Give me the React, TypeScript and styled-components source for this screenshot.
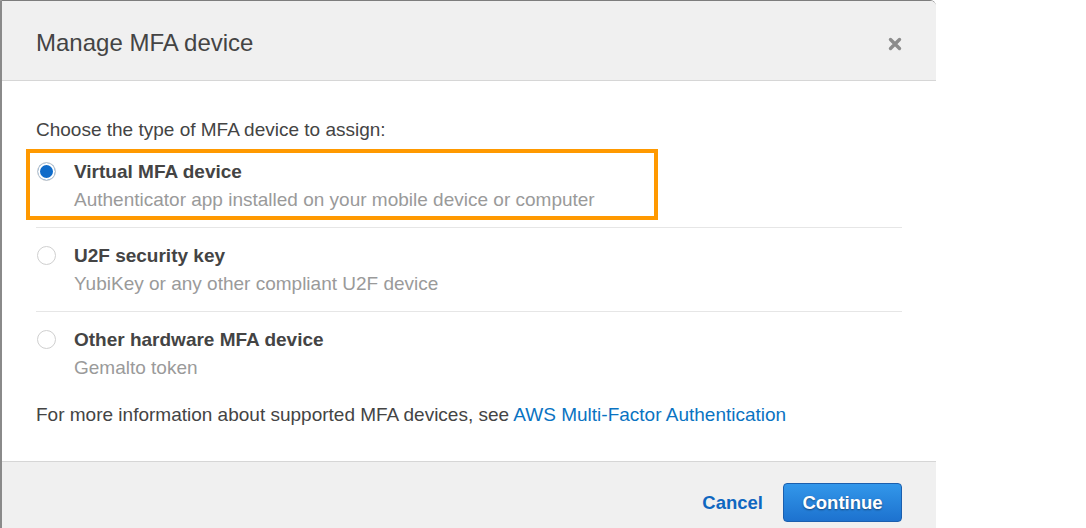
import React from 'react';
import styled, {createGlobalStyle} from "styled-components";

const GlobalStyle = createGlobalStyle`
  html, body {
    margin: 0;
    padding: 0;
    background: #ffffff;
    height: 528px;
    overflow: hidden;
  }
  body {
    font-family: "Liberation Sans", Arial, Helvetica, sans-serif;
    color: #444;
  }
`

type Option = {
  title: string
  description: string
  selected?: boolean
  highlighted?: boolean
}

const options: Option[] = [
  {
    title: "Virtual MFA device",
    description: "Authenticator app installed on your mobile device or computer",
    selected: true,
    highlighted: true,
  },
  {
    title: "U2F security key",
    description: "YubiKey or any other compliant U2F device",
  },
  {
    title: "Other hardware MFA device",
    description: "Gemalto token",
  },
]

const CloseIcon = () => (
  <svg width="14" height="14" viewBox="0 0 14 14">
    <path d="M2.5 2.5 L11.5 11.5 M11.5 2.5 L2.5 11.5" stroke="#8c8c8c" strokeWidth="3.4" strokeLinecap="round"/>
  </svg>
)

export default function App() {
  return (
    <>
      <GlobalStyle/>
      <Dialog>
        <Header>
          <Title>Manage MFA device</Title>
          <CloseButton aria-label="Close"><CloseIcon/></CloseButton>
        </Header>
        <Body>
          <Prompt>Choose the type of MFA device to assign:</Prompt>
          <OptionList>
            {options.map((o) => (
              <OptionRow key={o.title}>
                {o.highlighted && <Highlight/>}
                <Radio $selected={o.selected}/>
                <OptionText>
                  <OptionTitle>{o.title}</OptionTitle>
                  <OptionDesc>{o.description}</OptionDesc>
                </OptionText>
              </OptionRow>
            ))}
          </OptionList>
          <Info>
            For more information about supported MFA devices, see <Link href="#">AWS Multi-Factor Authentication</Link>
          </Info>
        </Body>
        <Footer>
          <CancelButton>Cancel</CancelButton>
          <PrimaryButton>Continue</PrimaryButton>
        </Footer>
      </Dialog>
    </>
  )
}

const Dialog = styled.div`
  width: 934px;
  height: 527px;
  background: #fff;
  border-top: 1px solid #7d7d7d;
  border-left: 2px solid #8a8a8a;
  border-top-right-radius: 6px;
  overflow: hidden;
  display: flex;
  flex-direction: column;
`

const Header = styled.div`
  flex: none;
  height: 79px;
  background: #f0f0f0;
  border-bottom: 1px solid #d6d6d6;
  display: flex;
  align-items: center;
  justify-content: space-between;
  padding: 0 34px 0 34px;
`

const Title = styled.h1`
  margin: 0;
  font-size: 24px;
  font-weight: 400;
  color: #444;
  padding-top: 4px;
`

const CloseButton = styled.button`
  border: none;
  background: none;
  padding: 0;
  display: flex;
  margin-top: 6px;
`

const Body = styled.div`
  flex: none;
  padding: 35px 34px 32px 34px;
  border-bottom: 1px solid #d6d6d6;
`

const Prompt = styled.p`
  margin: 0;
  font-size: 19px;
  line-height: 28px;
`

const OptionList = styled.div`
  display: flex;
  flex-direction: column;
`

const OptionRow = styled.label`
  position: relative;
  display: flex;
  align-items: flex-start;
  gap: 18px;
  padding: 14px 0 13px;
  border-bottom: 1px solid #e6e6e6;

  &:last-child {
    border-bottom: none;
  }
`

const Highlight = styled.div`
  position: absolute;
  left: -10px;
  top: 5px;
  width: 624px;
  height: 63px;
  border: 4px solid #ff9900;
  pointer-events: none;
`

const Radio = styled.span<{ $selected?: boolean }>`
  flex: none;
  box-sizing: border-box;
  width: 19px;
  height: 19px;
  margin: 4px 0 0 1px;
  border-radius: 50%;
  border: 1px solid #cfcfcf;
  background: ${p => p.$selected ? "#0f6bc9" : "#fff"};
  box-shadow: ${p => p.$selected ? "inset 0 0 0 2px #fff" : "none"};
`

const OptionText = styled.div`
  display: flex;
  flex-direction: column;
`

const OptionTitle = styled.span`
  font-size: 19px;
  font-weight: 700;
  line-height: 28px;
  color: #444;
`

const OptionDesc = styled.span`
  font-size: 19px;
  line-height: 28px;
  color: #9a9a9a;
`

const Info = styled.p`
  margin: 6px 0 0;
  font-size: 19px;
  line-height: 28px;
  color: #444;
`

const Link = styled.a`
  color: #0a73c2;
  text-decoration: none;
`

const Footer = styled.div`
  flex: 1;
  background: #f0f0f0;
  display: flex;
  justify-content: flex-end;
  align-items: flex-start;
  gap: 20px;
  padding: 21px 34px 0 0;
`

const CancelButton = styled.button`
  border: none;
  background: none;
  padding: 0;
  height: 39px;
  font-family: inherit;
  font-size: 18.5px;
  font-weight: 700;
  color: #0f67c0;
`

const PrimaryButton = styled.button`
  width: 119px;
  height: 39px;
  border: 1px solid #1b5fae;
  border-radius: 4px;
  background: linear-gradient(#3297ea, #1d72cf);
  color: #fff;
  font-family: inherit;
  font-size: 18.5px;
  font-weight: 700;
  text-shadow: 0 1px 2px rgba(0, 0, 0, 0.45);
`
